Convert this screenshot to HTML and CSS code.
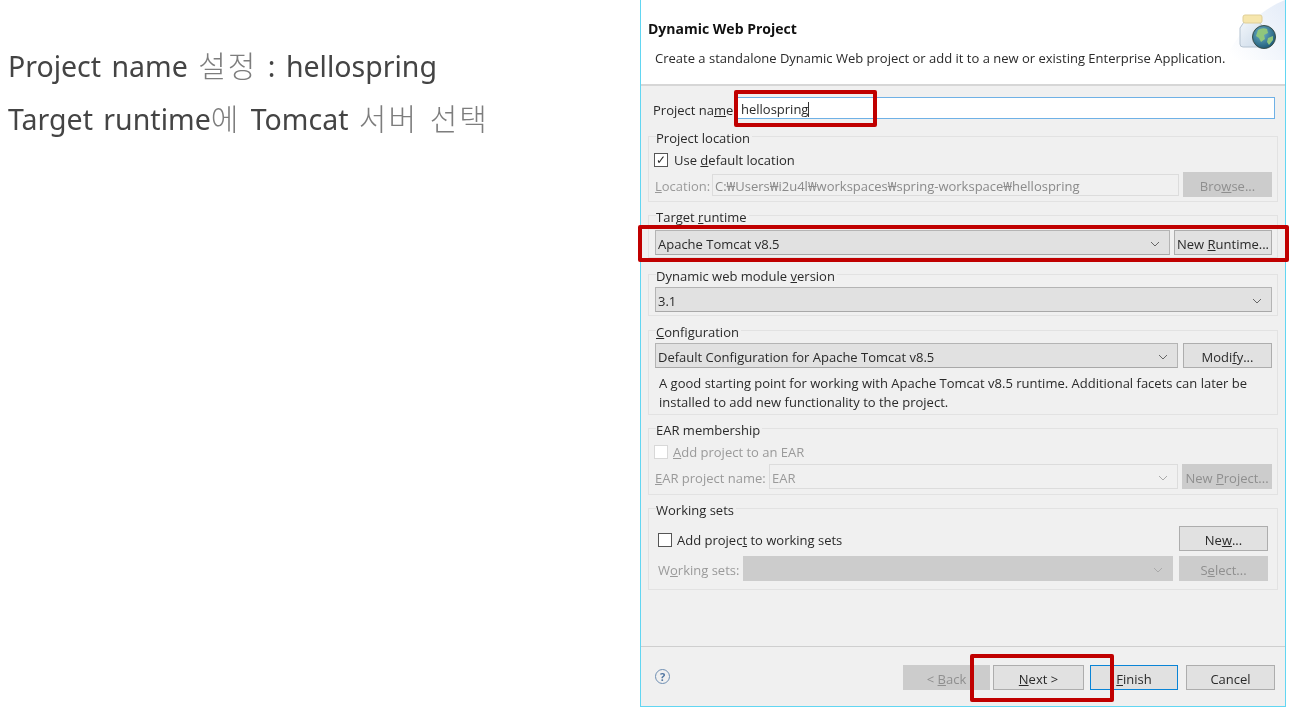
FILE: index.html
```html
<!DOCTYPE html>
<html>
<head>
	<title>Dynamic Web Project</title>
	<link rel="stylesheet" href="styles.css">
</head>
<body>
<div class="page">
	<div class="notes">
		<p>Project name <span class="ko">설정</span> : hellospring</p>
		<p>Target runtime<span class="ko">에</span> Tomcat <span class="ko">서버 선택</span></p>
	</div>

	<div class="dialog">
		<div class="head">
			<div class="head-text">
				<div class="title">Dynamic Web Project</div>
				<div class="desc">Create a standalone Dynamic Web project or add it to a new or existing Enterprise Application.</div>
			</div>
			<svg class="jar" width="66" height="60" viewBox="0 0 66 60">
				<defs>
					<linearGradient id="fade" x1="1" y1="0" x2="0" y2="0.8">
						<stop offset="0" stop-color="#e4ecf8"/>
						<stop offset="1" stop-color="#ffffff"/>
					</linearGradient>
					<linearGradient id="glass" x1="0" y1="0" x2="1" y2="1">
						<stop offset="0" stop-color="#f2f6fa"/>
						<stop offset="1" stop-color="#c9d8e8"/>
					</linearGradient>
					<radialGradient id="sea" cx="0.4" cy="0.35" r="0.75">
						<stop offset="0" stop-color="#6fb3c9"/>
						<stop offset="1" stop-color="#14506f"/>
					</radialGradient>
				</defs>
				<path d="M66 0 C46 8 22 26 6 60 L66 60 Z" fill="url(#fade)"/>
				<path d="M25 22 h15 l5 6 v16 q0 3 -3 3 h-18 q-3 0 -3 -3 v-16 Z" fill="url(#glass)" stroke="#b4c2d0"/>
				<rect x="24" y="15" width="19" height="8" rx="2" fill="#f6e6ad" stroke="#e0cf98"/>
				<circle cx="45" cy="37" r="11.5" fill="url(#sea)" stroke="#3b4f4a"/>
				<path d="M39 30 q5 -3 9 -1 l1 4 -4 2 1 4 -4 3 -2 -4 -3 -2 Z M49 38 l5 -2 0 4 -4 5 -2 -3 Z" fill="#8fc67c"/>
			</svg>
		</div>

		<div class="body">
			<div class="name-row">
				<span class="name-label">Project na<u>m</u>e:</span>
				<div class="field focus">hellospring<span class="caret"></span></div>
			</div>

			<div class="group g-location">
				<div class="legend">Project location</div>
				<label class="check-row r-default"><span class="box">&#10003;</span><span>Use <u>d</u>efault location</span></label>
				<div class="row r-location">
					<span class="off lbl-location"><u>L</u>ocation:</span>
					<div class="field locked">C:&#8361;Users&#8361;i2u4l&#8361;workspaces&#8361;spring-workspace&#8361;hellospring</div>
					<div class="btn off-btn w-89">Bro<u>w</u>se...</div>
				</div>
			</div>

			<div class="group g-runtime">
				<div class="legend">Target <u>r</u>untime</div>
				<div class="row r-runtime">
					<div class="combo"><span>Apache Tomcat v8.5</span><svg class="arrow" viewBox="0 0 10 6"><path d="M1 1l4 4 4-4"/></svg></div>
					<div class="btn w-98">New <u>R</u>untime...</div>
				</div>
			</div>

			<div class="group g-module">
				<div class="legend">Dynamic web module <u>v</u>ersion</div>
				<div class="row r-module">
					<div class="combo"><span>3.1</span><svg class="arrow" viewBox="0 0 10 6"><path d="M1 1l4 4 4-4"/></svg></div>
				</div>
			</div>

			<div class="group g-config">
				<div class="legend"><u>C</u>onfiguration</div>
				<div class="row r-config">
					<div class="combo"><span>Default Configuration for Apache Tomcat v8.5</span><svg class="arrow" viewBox="0 0 10 6"><path d="M1 1l4 4 4-4"/></svg></div>
					<div class="btn w-89">Modi<u>f</u>y...</div>
				</div>
				<p class="hint">A good starting point for working with Apache Tomcat v8.5 runtime. Additional facets can later be installed to add new functionality to the project.</p>
			</div>

			<div class="group g-ear">
				<div class="legend">EAR membership</div>
				<label class="check-row r-addear off"><span class="box box-off"></span><span><u>A</u>dd project to an EAR</span></label>
				<div class="row r-ear">
					<span class="off lbl-ear"><u>E</u>AR project name:</span>
					<div class="combo combo-light off"><span>EAR</span><svg class="arrow" viewBox="0 0 10 6"><path d="M1 1l4 4 4-4"/></svg></div>
					<div class="btn off-btn w-90">New <u>P</u>roject...</div>
				</div>
			</div>

			<div class="group g-sets">
				<div class="legend legend-sets">Working sets</div>
				<div class="row r-addsets">
					<label class="check-row"><span class="box"></span><span>Add projec<u>t</u> to working sets</span></label>
					<div class="btn w-89 push">Ne<u>w</u>...</div>
				</div>
				<div class="row r-sets">
					<span class="off lbl-sets">W<u>o</u>rking sets:</span>
					<div class="combo combo-off"><svg class="arrow" viewBox="0 0 10 6"><path d="M1 1l4 4 4-4"/></svg></div>
					<div class="btn off-btn w-89">S<u>e</u>lect...</div>
				</div>
			</div>
		</div>

		<div class="foot">
			<span class="help">?</span>
			<div class="btn off-btn w-87">&lt; <u>B</u>ack</div>
			<div class="btn w-91 next"><u>N</u>ext &gt;</div>
			<div class="btn w-88 finish"><u>F</u>inish</div>
			<div class="btn w-89 cancel">Cancel</div>
		</div>

		<!-- red marks drawn over the screenshot -->
		<div class="mark mark-name"></div>
		<div class="mark mark-runtime"></div>
		<div class="mark mark-next"></div>
	</div>
</div>
</body>
</html>
```

FILE: styles.css
```css
html, body{
	margin: 0;
	background: white;
}
.page{
	display: flex;
	width: 1297px;
	height: 723px;
	overflow: hidden;
}
.notes{
	width: 640px;
	flex: none;
	box-sizing: border-box;
	padding: 38px 0 0 8px;
	font-family: "Noto Sans", "Noto Sans CJK KR", sans-serif;
	font-size: 28.5px;
	word-spacing: 3px;
	color: #444;
	filter: blur(0.3px);
}
.notes p{
	margin: 0;
	height: 53px;
	line-height: 53px;
	white-space: nowrap;
}
.ko{
	font-family: "Noto Sans CJK KR", sans-serif;
	font-size: 30px;
	font-weight: 300;
	letter-spacing: 2px;
	color: #7d7d7d;
}

.dialog{
	position: relative;
	width: 646px;
	height: 707px;
	flex: none;
	box-sizing: border-box;
	display: flex;
	flex-direction: column;
	border: 1px solid #62d6f2;
	border-top: none;
	background: #f0f0f0;
	font-family: "Open Sans", "Noto Sans", sans-serif;
	font-size: 13px;
	color: #2a2a2a;
	filter: blur(0.3px);
}
.head{
	height: 84px;
	flex: none;
	display: flex;
	background: white;
	border-bottom: 2px solid #d6d6d6;
}
.head-text{
	flex: 1;
	min-width: 0;
	padding: 20px 0 0 7px;
}
.title{
	font-size: 14px;
	font-weight: 700;
	line-height: 18px;
	color: #111;
}
.desc{
	margin: 11px 0 0 7px;
	line-height: 18px;
	white-space: nowrap;
}
.jar{
	flex: none;
}

.body{
	flex: 1;
	padding: 11px 7px 0;
}
.name-row{
	display: flex;
	align-items: center;
	height: 22px;
	margin: 0 3px 0 5px;
}
.name-label{
	width: 83px;
	flex: none;
	padding-top: 3px;
	white-space: nowrap;
}
.field{
	flex: 1;
	height: 22px;
	box-sizing: border-box;
	padding: 1px 0 0 4px;
	line-height: 21px;
	background: white;
	border: 1px solid #d0d0d0;
	white-space: nowrap;
}
.focus{
	border-color: #6fb1e6;
}
.caret{
	display: inline-block;
	width: 1px;
	height: 15px;
	vertical-align: -3px;
	background: #333;
}
.locked{
	background: #f0f0f0;
	border-color: #dcdcdc;
	color: #8a8a8a;
	padding-left: 2px;
}

.group{
	border: 1px solid #e2e2e2;
	padding: 0 5px 0 6px;
}
.legend{
	width: fit-content;
	margin: -7px 0 0 1px;
	height: 16px;
	line-height: 16px;
	padding-right: 2px;
	background: #f0f0f0;
}
.legend-sets{
	margin-left: -2px;
}
.row{
	display: flex;
	align-items: center;
}
.check-row{
	display: flex;
	align-items: center;
	height: 16px;
	white-space: nowrap;
}
.box{
	width: 14px;
	height: 14px;
	box-sizing: border-box;
	flex: none;
	margin-right: 5px;
	background: white;
	border: 1px solid #555;
	font-size: 12px;
	line-height: 12px;
	text-align: center;
}
.box-off{
	border-color: #d8d8d8;
}
.off{
	color: #9a9a9a;
	white-space: nowrap;
}

.combo{
	flex: 1;
	height: 25px;
	box-sizing: border-box;
	display: flex;
	align-items: center;
	padding: 2px 9px 0 2px;
	background: #e1e1e1;
	border: 1px solid #b4b4b4;
	border-bottom-color: #a8a8a8;
	white-space: nowrap;
}
.combo-light{
	background: #f0f0f0;
	border-color: #dcdcdc;
}
.combo-off{
	background: #cccccc;
	border-color: #cccccc;
}
.arrow{
	width: 10px;
	height: 6px;
	flex: none;
	margin-left: auto;
	fill: none;
	stroke: #666;
	stroke-width: 1;
}
.combo-light .arrow, .combo-off .arrow{
	stroke: #aaa;
}
.btn{
	height: 25px;
	box-sizing: border-box;
	flex: none;
	line-height: 26px;
	text-align: center;
	background: #e1e1e1;
	border: 1px solid #adadad;
	white-space: nowrap;
}
.off-btn{
	background: #cccccc;
	border-color: #cccccc;
	color: #8f8f8f;
}
.w-87{ width: 87px; }
.w-88{ width: 88px; }
.w-89{ width: 89px; }
.w-90{ width: 90px; }
.w-91{ width: 91px; }
.w-98{ width: 98px; }
.push{
	margin-left: auto;
}

.g-location{
	margin-top: 17px;
	padding-bottom: 4px;
}
.r-default{
	margin: 6px 0 0 -1px;
}
.r-default .box{
	margin-right: 6px;
}
.r-location{
	margin-top: 4px;
}
.lbl-location{
	width: 57px;
	flex: none;
	margin-top: 2px;
}
.r-location .field{
	margin-right: 4px;
}
.g-runtime{
	margin-top: 13px;
	padding-bottom: 2px;
}
.r-runtime{
	margin-top: 5px;
	gap: 4px;
}
.g-module{
	margin-top: 16px;
	padding-bottom: 3px;
}
.r-module{
	margin-top: 3px;
}
.g-config{
	margin-top: 14px;
	padding-bottom: 2px;
}
.r-config{
	margin-top: 3px;
	gap: 5px;
}
.hint{
	margin: 6px 0 0 4px;
	line-height: 19px;
	width: 602px;
}
.g-ear{
	margin-top: 13px;
	padding-bottom: 5px;
}
.r-addear{
	margin: 6px 0 -1px -1px;
}
.r-ear{
	margin-top: 5px;
	gap: 4px;
}
.lbl-ear{
	width: 110px;
	flex: none;
	margin-top: 2px;
}
.g-sets{
	margin-top: 13px;
	padding: 0 9px 8px;
}
.r-addsets{
	margin-top: 8px;
}
.r-addsets .check-row{
	padding-top: 2px;
}
.r-sets{
	margin-top: 5px;
	gap: 6px;
}
.lbl-sets{
	width: 79px;
	flex: none;
	margin-top: 2px;
}

.foot{
	height: 60px;
	flex: none;
	box-sizing: border-box;
	display: flex;
	align-items: flex-start;
	padding: 18px 10px 0 14px;
	border-top: 1px solid #cfcfcf;
}
.help{
	width: 15px;
	height: 15px;
	box-sizing: border-box;
	margin: 4px auto 0 0;
	border: 1px solid #6f8fb3;
	border-radius: 50%;
	color: #4f74a0;
	font-size: 11px;
	font-weight: 700;
	line-height: 13px;
	text-align: center;
}
.next{
	margin-left: 3px;
}
.finish{
	margin-left: 6px;
	border-color: #0a84d6;
}
.cancel{
	margin-left: 8px;
}

.mark{
	position: absolute;
	box-sizing: border-box;
	border: 4px solid #c00000;
	border-radius: 2px;
}
.mark-name{
	left: 93px;
	top: 90px;
	width: 143px;
	height: 37px;
}
.mark-runtime{
	left: -3px;
	top: 225px;
	width: 651px;
	height: 37px;
}
.mark-next{
	left: 329px;
	top: 654px;
	width: 144px;
	height: 48px;
}
```
